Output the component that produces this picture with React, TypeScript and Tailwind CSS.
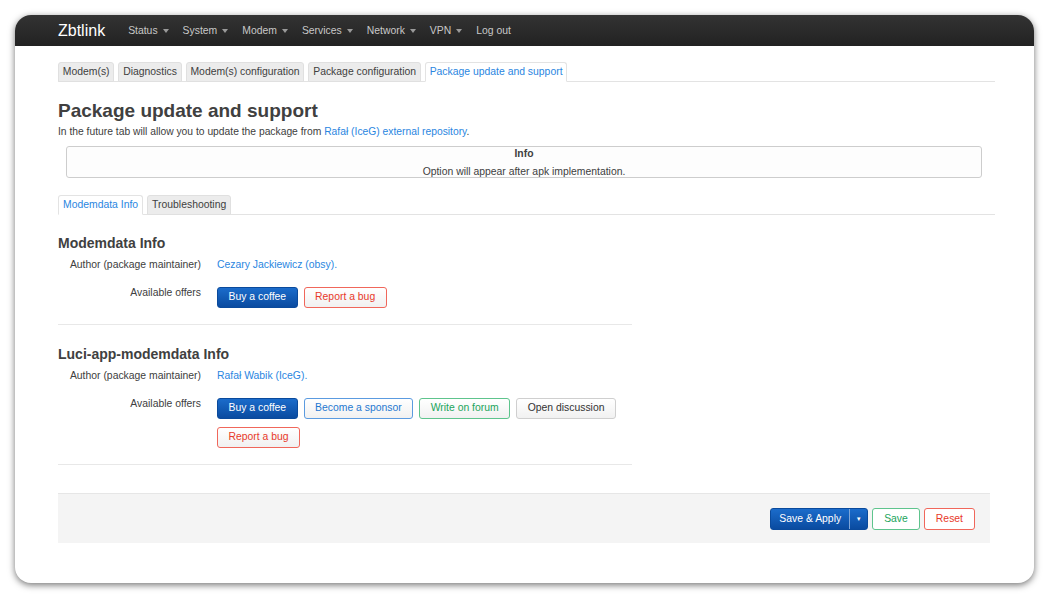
import { ReactNode } from 'react';

const navItems = ['Status', 'System', 'Modem', 'Services', 'Network', 'VPN'];
const topTabs = ['Modem(s)', 'Diagnostics', 'Modem(s) configuration', 'Package configuration', 'Package update and support'];

type Tone = 'primary' | 'blue' | 'green' | 'gray' | 'red';

const toneClass: Record<Tone, string> = {
  primary: 'bg-gradient-to-b from-[#1b6ccb] to-[#0a4ba0] border-[#0a4a9c] text-white',
  blue: 'bg-gradient-to-b from-white to-[#f1f1f1] border-[#5b9be0] text-[#1f78d1]',
  green: 'bg-gradient-to-b from-white to-[#f1f1f1] border-[#5ec48d] text-[#22a55c]',
  gray: 'bg-gradient-to-b from-white to-[#f1f1f1] border-[#cfcfcf] text-[#333]',
  red: 'bg-gradient-to-b from-white to-[#f1f1f1] border-[#f0675b] text-[#e8392a]',
};

function Btn({ tone, children }: { tone: Tone; children: ReactNode }) {
  return (
    <span className={`inline-flex h-[21px] items-center rounded-[3px] border px-[10.5px] text-[10.4px] leading-none ${toneClass[tone]}`}>
      {children}
    </span>
  );
}

function Row({ label, children }: { label: string; children: ReactNode }) {
  return (
    <div className="flex gap-[16px]">
      <div className="w-[143px] shrink-0 text-right text-[#404040]">{label}</div>
      <div className="flex-1">{children}</div>
    </div>
  );
}

function Section({ title, author, children }: { title: string; author: string; children: ReactNode }) {
  return (
    <div className="w-[574px] border-b border-[#e8e8e8]">
      <h3 className="text-[14px] font-bold leading-[20px] text-[#404040]">{title}</h3>
      <div className="mt-[5px]">
        <Row label="Author (package maintainer)">
          <span className="text-[#2a86df]">{author}</span>
        </Row>
      </div>
      <div className="mt-[14px] pb-[16px]">
        <Row label="Available offers">
          <div className="mt-[1px] flex flex-wrap gap-x-[6px] gap-y-[8px]">{children}</div>
        </Row>
      </div>
    </div>
  );
}

function Caret() {
  return <span className="inline-block h-0 w-0 border-x-[3.5px] border-t-[4px] border-x-transparent border-t-[#9a9a9a]" />;
}

export default function App() {
  return (
    <div className="h-[598px] bg-white px-[15px] pt-[15px] font-['Liberation_Sans',Arial,sans-serif] text-[10.4px] leading-[14px] text-[#404040]">
      <div className="h-[568px] overflow-hidden rounded-[16px] bg-white shadow-[0_2px_7px_rgba(0,0,0,0.55)]">
        <div className="flex h-[31px] items-center bg-gradient-to-b from-[#333] to-[#222] pl-[43px]">
          <span className="text-[16px] text-white">Zbtlink</span>
          <nav className="ml-[23px] flex items-center gap-[14px] text-[10.4px] text-[#c8c8c8]">
            {navItems.map((n) => (
              <span key={n} className="flex items-center gap-[5px]">
                {n}
                <Caret />
              </span>
            ))}
            <span>Log out</span>
          </nav>
        </div>

        <div className="pl-[43px] pr-[39px]">
          <div className="mt-[16px] flex gap-[4px] border-b border-[#e3e3e3]">
            {topTabs.map((t, i) => {
              const active = i === topTabs.length - 1;
              return (
                <span
                  key={t}
                  className={`-mb-px flex h-[20px] items-center rounded-t-[3px] border px-[3.8px] ${
                    active ? 'border-[#e3e3e3] border-b-white bg-white text-[#2a86df]' : 'border-[#e0e0e0] bg-[#ececec] text-[#404040]'
                  }`}
                >
                  {t}
                </span>
              );
            })}
          </div>

          <h2 className="mt-[17px] text-[19px] font-bold leading-[24px] text-[#404040]">Package update and support</h2>
          <p className="mt-[2px] text-[10.3px]">
            In the future tab will allow you to update the package from{' '}
            <span className="text-[#2a86df]">Rafał (IceG) external repository</span>.
          </p>

          <div className="ml-[8px] mr-[13px] mt-[7px] h-[32px] rounded-[3px] border border-[#cdcdcd] bg-[#fdfdfd] text-center">
            <div className="font-bold">Info</div>
            <div className="mt-[4px]">Option will appear after apk implementation.</div>
          </div>

          <div className="mt-[17px] flex gap-[4px] border-b border-[#e3e3e3]">
            <span className="-mb-px flex h-[20px] items-center rounded-t-[3px] border border-[#e3e3e3] border-b-white bg-white px-[4px] text-[#2a86df]">
              Modemdata Info
            </span>
            <span className="-mb-px flex h-[20px] items-center rounded-t-[3px] border border-[#e0e0e0] bg-[#ececec] px-[4px]">
              Troubleshooting
            </span>
          </div>

          <div className="mt-[18px]">
            <Section title="Modemdata Info" author="Cezary Jackiewicz (obsy).">
              <Btn tone="primary">Buy a coffee</Btn>
              <Btn tone="red">Report a bug</Btn>
            </Section>
          </div>

          <div className="mt-[19px]">
            <Section title="Luci-app-modemdata Info" author="Rafał Wabik (IceG).">
              <Btn tone="primary">Buy a coffee</Btn>
              <Btn tone="blue">Become a sponsor</Btn>
              <Btn tone="green">Write on forum</Btn>
              <Btn tone="gray">Open discussion</Btn>
              <Btn tone="red">Report a bug</Btn>
            </Section>
          </div>

          <div className="mr-[5px] mt-[28px] flex h-[50px] items-center justify-end gap-[4px] border-t border-[#e6e6e6] bg-[#f4f4f4] pr-[15px]">
            <span className="inline-flex h-[22px] items-stretch overflow-hidden rounded-[3px] border border-[#0a4a9c] bg-gradient-to-b from-[#1b6ccb] to-[#0a4ba0] text-white">
              <span className="flex items-center px-[8px]">Save &amp; Apply</span>
              <span className="flex w-[18px] items-center justify-center border-l border-[#7fa6d8] text-[6px]">▼</span>
            </span>
            <span className="inline-flex h-[22px] items-center rounded-[3px] border border-[#5ec48d] bg-white px-[11px] text-[#22a55c]">Save</span>
            <span className="inline-flex h-[22px] items-center rounded-[3px] border border-[#f0675b] bg-white px-[11px] text-[#e8392a]">Reset</span>
          </div>
        </div>
      </div>
    </div>
  );
}
